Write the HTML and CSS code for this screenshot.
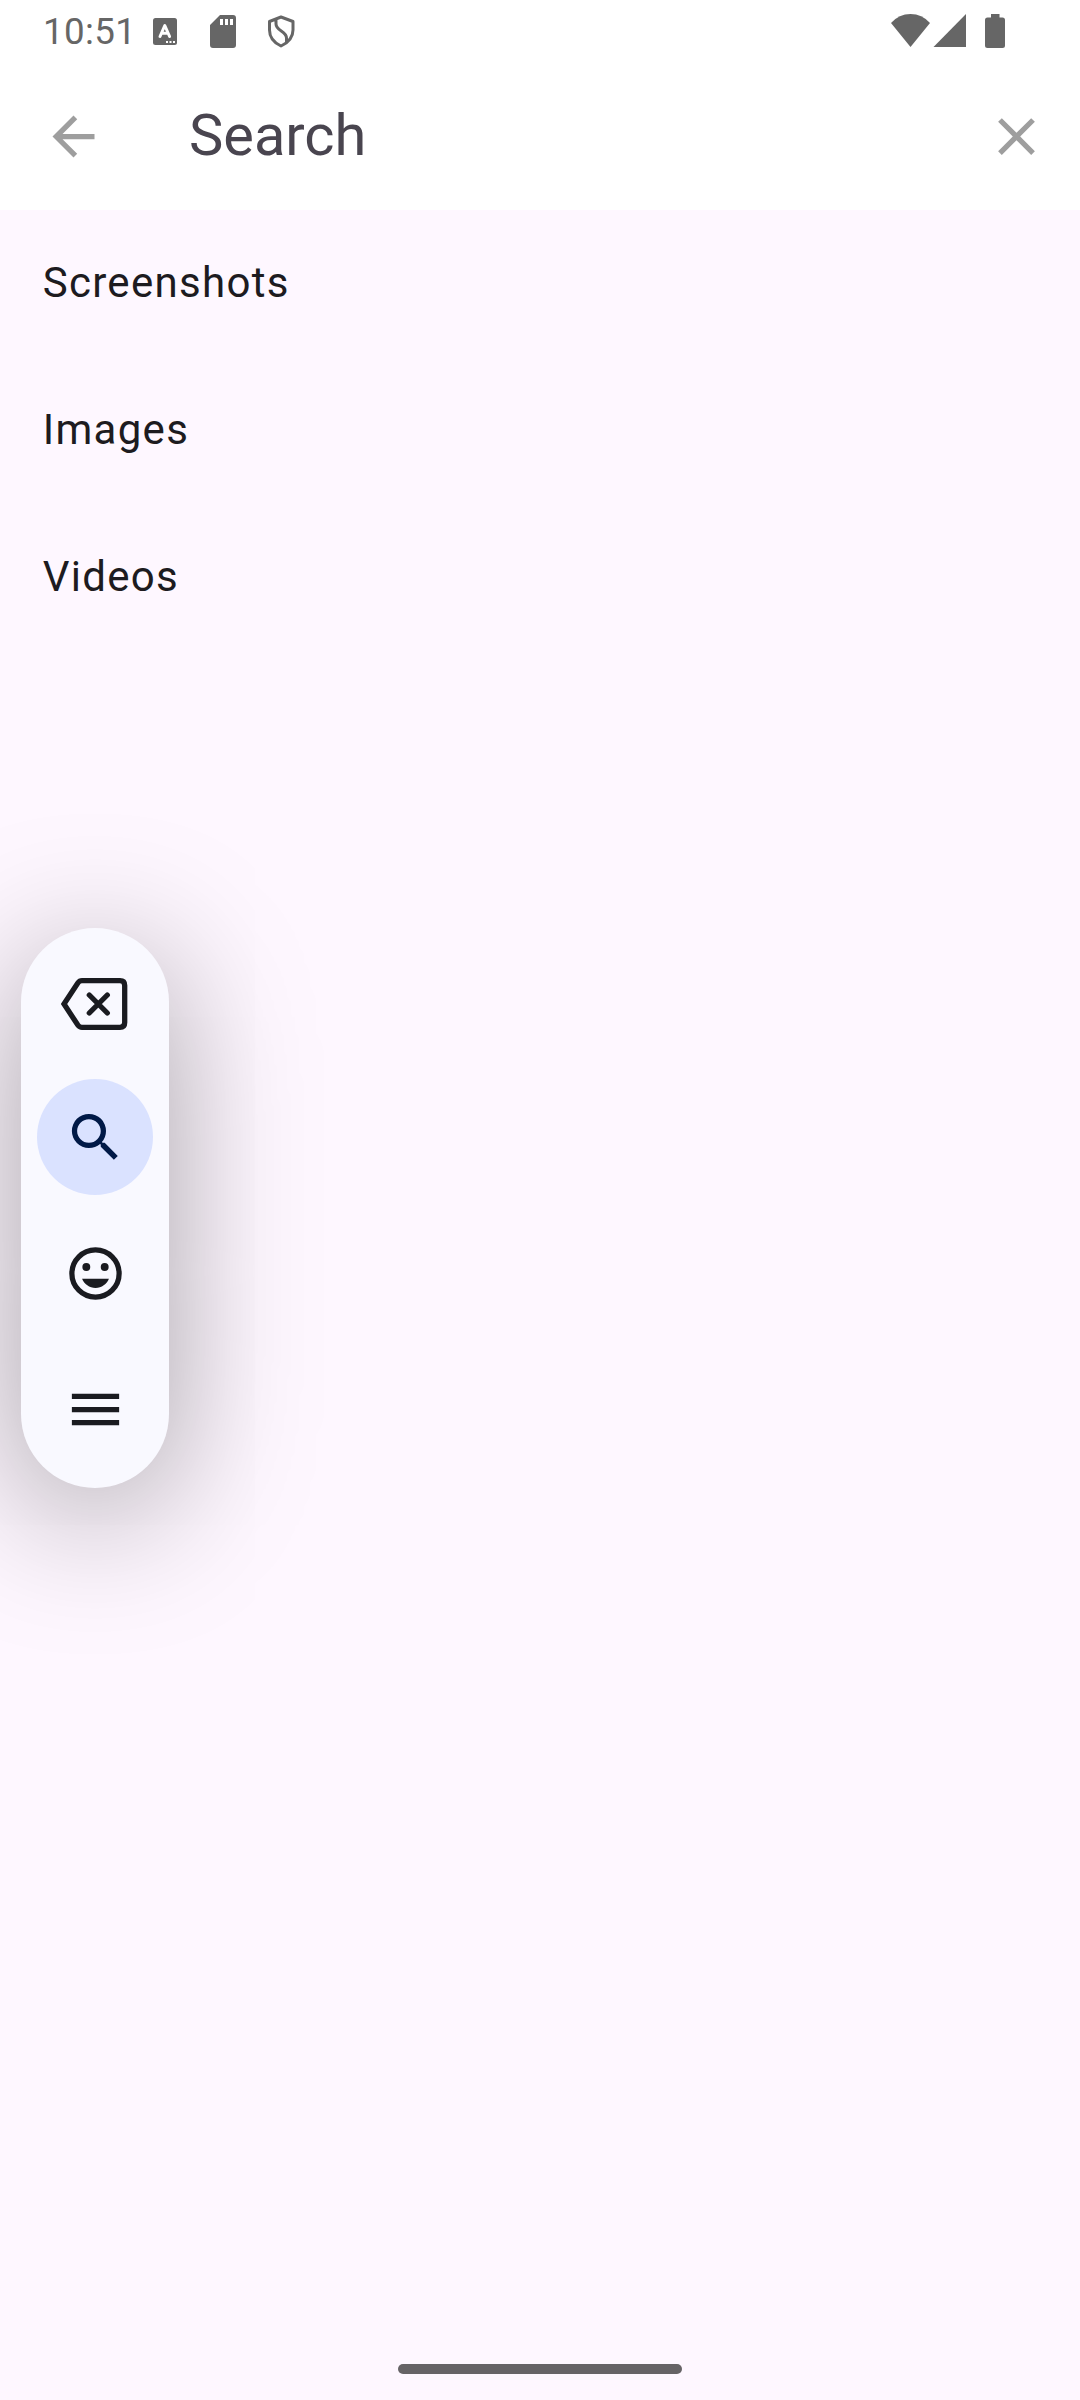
FILE: index.html
```html
<!DOCTYPE html>
<html lang="en">
<head>
<meta charset="utf-8">
<title>Search</title>
<link rel="stylesheet" href="styles.css">
</head>
<body>
<div class="screen">
  <header class="top">
    <div class="status">
      <span class="clock">10:51</span>
      <svg class="status-left" width="150" height="63" viewBox="0 0 150 63">
        <rect x="3" y="18" width="24" height="27" rx="2.5" fill="#666"/>
        <path d="M10 36.500L14.800 25.500L19.600 36.500M11.800 33.300H17.800" fill="none" stroke="#fff" stroke-width="3" stroke-linejoin="round" stroke-linecap="round"/>
        <path d="M16 41h2v2h-2zM19.500 41h2v2h-2zM23 41h2v2h-2z" fill="#fff"/>
        <path fill="#666" fill-rule="evenodd" d="M70 15H83a3 3 0 0 1 3 3V45a3 3 0 0 1-3 3H63a3 3 0 0 1-3-3V25zM70 19v6h3v-6zM75 19v6h3v-6zM80 19v6h3v-6z"/>
        <path d="M131 17L143 21.500V30C143 37 138.500 42.500 131 46C123.500 42.500 119.500 37 119.500 30V21.500ZM126 19.500V24C126 31 136.500 31 136.500 38V42" fill="none" stroke="#666" stroke-width="3" stroke-linejoin="round"/>
      </svg>
      <svg class="status-right" width="120" height="63" viewBox="0 0 120 63" fill="#666">
        <path d="M1 23Q9 14 20.500 14T40 23L20.500 47Z"/>
        <path d="M76 14V47H43.500Z"/>
        <path d="M101 14h8.500v3.500h3a2.500 2.500 0 0 1 2.500 2.500v25.500a2.500 2.500 0 0 1-2.500 2.500h-15a2.500 2.500 0 0 1-2.500-2.500v-25.500a2.500 2.500 0 0 1 2.500-2.500h3.500z"/>
      </svg>
    </div>
    <div class="searchbar">
      <svg class="icon" viewBox="0 0 24 24" fill="#9e9e9e"><path d="M20 11H7.830l5.590-5.590L12 4l-8 8 8 8 1.410-1.410L7.830 13H20v-2z"/></svg>
      <span class="query">Search</span>
      <svg class="icon" viewBox="0 0 24 24" fill="#9e9e9e"><path d="M19 6.410L17.590 5 12 10.590 6.410 5 5 6.410 10.590 12 5 17.590 6.410 19 12 13.410 17.590 19 19 17.590 13.410 12z"/></svg>
    </div>
  </header>
  <main class="list">
    <div class="item">Screenshots</div>
    <div class="item">Images</div>
    <div class="item">Videos</div>
  </main>
  <footer class="nav"><div class="handle"></div></footer>
  <aside class="toolbar">
    <div class="tool tool-first">
      <svg width="68" height="54" viewBox="0 0 68 54" fill="none" stroke="#1a1b20" stroke-width="5.300">
        <path d="M3 27L16.800 6Q18.500 3.700 21 3.700H59Q63.700 3.700 63.700 8.500V45.500Q63.700 50.300 59 50.300H21Q18.500 50.300 16.800 48Z"/>
        <path d="M28.300 18L46.300 36M46.300 18L28.300 36" stroke-linecap="round"/>
      </svg>
    </div>
    <div class="tool"><div class="active"><svg class="icon" viewBox="0 0 24 24" fill="#001947"><path d="M15.500 14h-.790l-.280-.270A6.471 6.471 0 0 0 16 9.500 6.500 6.500 0 1 0 9.500 16c1.610 0 3.090-.590 4.230-1.570l.270.280v.790l5 4.990L20.490 19l-4.990-5zm-6 0C7.010 14 5 11.990 5 9.500S7.010 5 9.500 5 14 7.010 14 9.500 11.990 14 9.500 14z"/></svg></div></div>
    <div class="tool"><svg class="icon" viewBox="0 0 24 24" fill="#1a1b20"><circle cx="12" cy="12" r="9" fill="none" stroke="#1a1b20" stroke-width="2"/><circle cx="8.500" cy="9.500" r="1.500"/><circle cx="15.500" cy="9.500" r="1.500"/><path d="M12 17.500c2.330 0 4.310-1.460 5.110-3.500H6.890c.8 2.040 2.780 3.500 5.110 3.500z"/></svg></div>
    <div class="tool"><svg class="icon" viewBox="0 0 24 24" fill="#1a1b20"><path d="M3 18h18v-2H3v2zm0-5h18v-2H3v2zm0-7v2h18V6H3z"/></svg></div>
  </aside>
</div>
</body>
</html>
```
FILE: styles.css
```css
body {
  margin: 0;
  font-family: Roboto, sans-serif;
}
.screen {
  position: relative;
  display: flex;
  flex-direction: column;
  width: 1080px;
  height: 2400px;
  overflow: hidden;
  background: #fef7ff;
}
.top {
  height: 210px;
  background: #fff;
}
.status {
  display: flex;
  height: 63px;
  padding: 0 70px 0 43px;
}
.clock {
  width: 107px;
  font-size: 36.75px;
  line-height: 64px;
  letter-spacing: 0.35px;
  color: #666;
}
.status-right {
  margin-left: auto;
}
.searchbar {
  display: flex;
  align-items: center;
  height: 147px;
  padding: 0 32px 0 42px;
}
.icon {
  display: block;
  flex: none;
  width: 63px;
  height: 63px;
}
.query {
  flex: 1;
  margin: 0 0 4px 84px;
  font-size: 57.75px;
  line-height: 68px;
  color: #49454f;
}
.list {
  flex: 1;
}
.item {
  height: 147px;
  padding-left: 42.7px;
  font-size: 42px;
  line-height: 145px;
  letter-spacing: 1.3px;
  color: #1d1b20;
}
.nav {
  display: flex;
  justify-content: center;
  height: 36px;
}
.handle {
  width: 284px;
  height: 10px;
  border-radius: 5px;
  background: #666366;
}
.toolbar {
  position: absolute;
  left: 21px;
  top: 928px;
  box-sizing: border-box;
  width: 148px;
  height: 559.5px;
  padding-top: 10px;
  border-radius: 74px;
  background: #f9f9ff;
  box-shadow: 0 26px 140px rgba(0, 0, 0, 0.36);
}
.tool {
  display: flex;
  align-items: center;
  justify-content: center;
  height: 136px;
}
.tool-first {
  height: 131px;
}
.active {
  display: flex;
  align-items: center;
  justify-content: center;
  width: 116px;
  height: 116px;
  border-radius: 50%;
  background: #dae2ff;
}
```
